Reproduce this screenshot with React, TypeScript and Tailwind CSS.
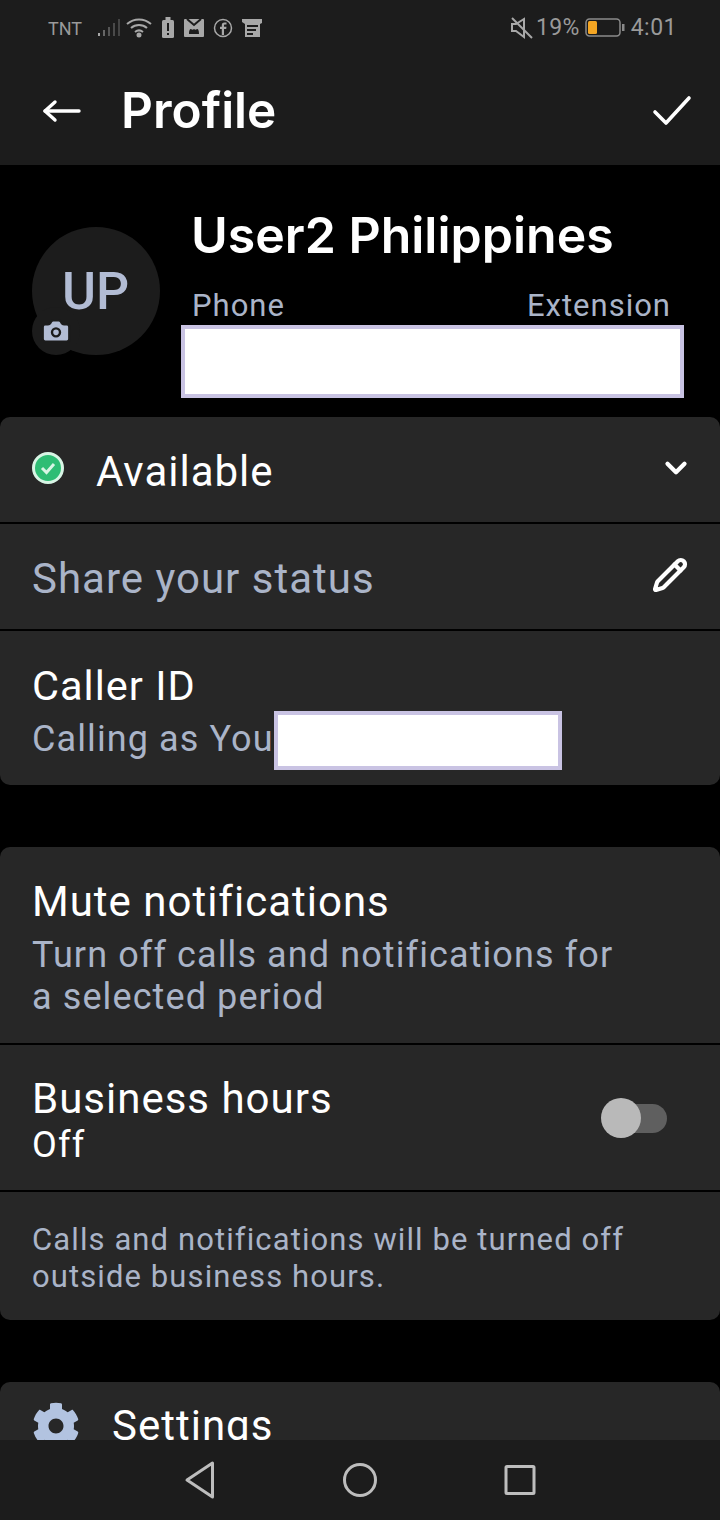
import { ChevronDown, Pencil, Camera } from "lucide-react";
import { FaCog } from "react-icons/fa";

const StatusBar = () => (
  <div className="h-[56px] flex items-center justify-between pl-[48px] pr-[43px] text-[#9a9a9a]">
    <div className="flex items-center">
      <span className="text-[18px] w-[49px]">TNT</span>
      <svg width="24" height="20" viewBox="0 0 24 20" className="mr-[5px]">
        <rect x="1" y="15" width="2" height="3" fill="#a8a8a8" />
        <rect x="6" y="12" width="2" height="6" fill="#666" />
        <rect x="11" y="9" width="2" height="9" fill="#555" />
        <rect x="16" y="5" width="2" height="13" fill="#4a4a4a" />
        <rect x="21" y="1" width="2" height="17" fill="#444" />
      </svg>
      <svg width="26" height="22" viewBox="0 0 26 22" fill="none" stroke="#a8a8a8" strokeWidth="2" className="mr-[9px]">
        <path d="M1 7c7-6 17-6 24 0" />
        <path d="M5 11c4.500-4 11.500-4 16 0" />
        <path d="M9 15c2.500-2 5.500-2 8 0" />
        <circle cx="13" cy="18" r="1.500" fill="#a8a8a8" />
      </svg>
      <svg width="14" height="22" viewBox="0 0 14 22" className="mr-[9px]">
        <rect x="4.500" y="0" width="5" height="3" fill="#a8a8a8" />
        <rect x="1" y="3" width="12" height="18" rx="1.500" fill="#a8a8a8" />
        <rect x="6" y="6" width="2" height="8" fill="#1c1c1c" />
        <rect x="6" y="16" width="2" height="2" fill="#1c1c1c" />
      </svg>
      <svg width="20" height="18" viewBox="0 0 20 18" className="mr-[9px]">
        <rect width="20" height="18" rx="1" fill="#a8a8a8" />
        <path d="M3 0l7 6 7-6" fill="none" stroke="#1c1c1c" strokeWidth="2" />
        <path d="M5 15c0-4 1-5 2-5 1 1 2 1 3 0 1 1 2 1 3 0 1 0 2 1 2 5z" fill="#1c1c1c" />
      </svg>
      <svg width="20" height="20" viewBox="0 0 20 20" className="mr-[9px]">
        <circle cx="10" cy="10" r="8.500" fill="none" stroke="#a8a8a8" strokeWidth="1.500" />
        <path d="M11 17v-6h2.200l.3-2.200H11V7.500c0-.7.3-1 1-1h1.500V4.500H11.500C9.500 4.500 8.800 5.800 8.800 7.300v1.500H7V11h1.800v6z" fill="#a8a8a8" />
      </svg>
      <svg width="20" height="18" viewBox="0 0 20 18">
        <path d="M0 0h20v4l-2 1v13H3V5L0 3z" fill="#a8a8a8" />
        <rect x="5" y="6" width="11" height="2" fill="#1c1c1c" />
        <rect x="5" y="10" width="9" height="2" fill="#1c1c1c" />
        <rect x="5" y="14" width="6" height="2" fill="#1c1c1c" />
      </svg>
    </div>
    <div className="flex items-center text-[23px]">
      <svg width="22" height="22" viewBox="0 0 22 22" fill="none" stroke="#a8a8a8" strokeWidth="2" className="mr-[3px]">
        <path d="M1 7v7h4l8 6V2L5 7z" />
        <path d="M1 1l20 20" />
      </svg>
      <span className="tracking-[0.3px]">19%</span>
      <svg width="40" height="20" viewBox="0 0 40 20" className="ml-[5px] mr-[6px]">
        <rect x="1" y="1" width="34" height="17" rx="3.500" fill="none" stroke="#8a8a8a" strokeWidth="1.500" />
        <rect x="3" y="3" width="9" height="13" rx="1.500" fill="#f5a623" />
        <rect x="37" y="6" width="2.500" height="7" fill="#8a8a8a" />
      </svg>
      <span className="tracking-[0.5px]">4:01</span>
    </div>
  </div>
);

const Redacted = ({ className }: { className: string }) => (
  <div className={`bg-white border-[#c9c3e3] border-[4px] ${className}`} />
);

const Divider = () => <div className="h-[2px] bg-black" />;

const App = () => {
  return (
    <div
      className="w-[720px] h-[1520px] bg-black flex flex-col overflow-hidden text-white"
      style={{ fontFamily: "Roboto, 'Noto Sans', sans-serif" }}
    >
      <div className="bg-[#1c1c1c] h-[165px] shrink-0">
        <StatusBar />
        <div className="flex items-center h-[109px] pl-[42px] pr-[28px]">
          <svg width="40" height="24" viewBox="0 0 40 24" fill="none" stroke="white" strokeWidth="3.4" strokeLinecap="round" strokeLinejoin="round">
            <path d="M3 12h34" />
            <path d="M13 3l-10 9 10 9" />
          </svg>
          <h1 className="ml-[39px] text-[49.5px] font-semibold flex-1" style={{ fontFamily: "Inter, sans-serif" }}>
            Profile
          </h1>
          <svg width="40" height="32" viewBox="0 0 40 32" fill="none" stroke="white" strokeWidth="3.6" strokeLinecap="round" strokeLinejoin="round">
            <path d="M3 17l11 11L37 3" />
          </svg>
        </div>
      </div>

      <div className="flex-1 min-h-0 overflow-hidden">
        <div className="h-[252px] flex pl-[32px] pr-[36px]">
          <div className="relative w-[128px] h-[128px] mt-[62px] rounded-full bg-[#1c1c1c] flex items-center justify-center shrink-0">
            <span className="text-[52px] font-medium text-[#b2bcd4] -ml-[1px] mt-[1px]">UP</span>
            <div className="absolute left-0 bottom-0 w-[48px] h-[48px] rounded-full bg-[#1c1c1c] flex items-center justify-center">
              <Camera size={32} fill="#b2bcd4" stroke="#1c1c1c" strokeWidth={1.8} />
            </div>
          </div>
          <div className="ml-[32px] flex-1 relative">
            <div className="text-[50px] font-semibold leading-[60px] mt-[40px] -ml-[1px]" style={{ fontFamily: "Inter, sans-serif" }}>
              User2 Philippines
            </div>
            <div className="flex justify-between mt-[23px] pr-[13px] text-[31px] leading-[36px] tracking-[1px] text-[#aab4c8]">
              <span>Phone</span>
              <span>Extension</span>
            </div>
            <Redacted className="absolute left-[-11px] right-0 top-[160px] h-[73px]" />
          </div>
        </div>

        <section className="bg-[#272727] rounded-t-[10px] rounded-b-[10px]">
          <div className="h-[105px] flex items-center pl-[32px] pr-[27px]">
            <div className="w-[32px] h-[32px] rounded-full bg-[#2ebd74] border-[3px] border-[#d8f5e5] flex items-center justify-center -mt-[3px]">
              <svg width="18" height="18" viewBox="0 0 18 18" fill="none" stroke="#d8f5e5" strokeWidth="3">
                <path d="M3 9l4.500 4.500L15 5" />
              </svg>
            </div>
            <span className="ml-[32px] text-[42px] tracking-[1px] flex-1 pt-[3px]">Available</span>
            <ChevronDown size={34} strokeWidth={3} className="-mt-[4px]" />
          </div>
          <Divider />
          <div className="h-[105px] flex items-center pl-[32px] pr-[32px]">
            <span className="text-[42px] tracking-[1px] text-[#aab4c8] flex-1 pt-[3px]">Share your status</span>
            <Pencil size={36} strokeWidth={2.8} className="-mt-[4px]" />
          </div>
          <Divider />
          <div className="h-[154px] pl-[32px] relative">
            <div className="text-[41.5px] leading-[48px] tracking-[1px] pt-[31px]">Caller ID</div>
            <div className="text-[36px] leading-[40px] tracking-[1.1px] text-[#aab4c8] mt-[9px]">Calling as You</div>
            <Redacted className="absolute left-[274px] top-[80px] w-[288px] h-[59px]" />
          </div>
        </section>

        <section className="mt-[62px] bg-[#272727] rounded-[10px]">
          <div className="h-[196px] pl-[32px] pr-[32px] pt-[31px]">
            <div className="text-[42px] leading-[48px] tracking-[1px]">Mute notifications</div>
            <div className="text-[36px] leading-[42px] tracking-[1.1px] text-[#aab4c8] mt-[8px]">
              Turn off calls and notifications for
              <br />
              a selected period
            </div>
          </div>
          <Divider />
          <div className="h-[145px] flex items-center pl-[32px] pr-[53px]">
            <div className="flex-1 pt-[6px]">
              <div className="text-[42px] leading-[48px] tracking-[1px]">Business hours</div>
              <div className="text-[36px] leading-[42px] tracking-[1.2px] mt-[1px]">Off</div>
            </div>
            <div className="relative w-[60px] h-[29px] rounded-full bg-[#5f5f5f] ml-auto mt-[1px]">
              <div className="absolute left-[-6px] top-[-6px] w-[40px] h-[40px] rounded-full bg-[#b9b9b9]" />
            </div>
          </div>
          <Divider />
          <div className="h-[128px] pl-[32px] pt-[29px] text-[31px] leading-[37px] tracking-[1.1px] text-[#aab4c8]">
            Calls and notifications will be turned off
            <br />
            outside business hours.
          </div>
        </section>

        <section className="mt-[62px] bg-[#272727] rounded-t-[10px] h-[120px] flex items-start pl-[32px] pt-[20px]">
          <FaCog size={48} className="text-[#b2c3e0] shrink-0" />
          <span className="ml-[32px] text-[42px] leading-[48px] tracking-[1px]">Settings</span>
        </section>
      </div>

      <div className="h-[80px] shrink-0 bg-[#1c1c1c] flex items-center justify-center gap-[116px]">
        <svg width="44" height="44" viewBox="0 0 44 44" fill="none" stroke="#bdbdbd" strokeWidth="3" strokeLinejoin="round">
          <path d="M34.500 5v34L9 22z" />
        </svg>
        <svg width="44" height="44" viewBox="0 0 44 44" fill="none" stroke="#bdbdbd" strokeWidth="3">
          <circle cx="22" cy="22" r="15.500" />
        </svg>
        <svg width="44" height="44" viewBox="0 0 44 44" fill="none" stroke="#bdbdbd" strokeWidth="3" strokeLinejoin="round">
          <rect x="8" y="8.500" width="28" height="27" rx="1" />
        </svg>
      </div>
    </div>
  );
};

export default App;
